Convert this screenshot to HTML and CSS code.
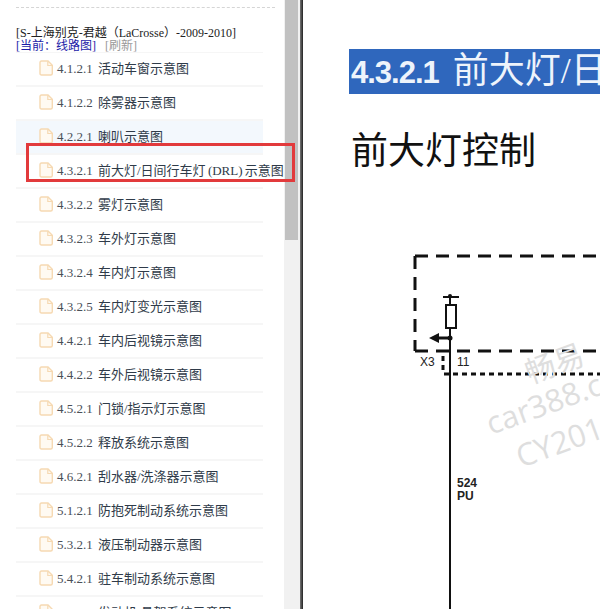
FILE: index.html
```html
<!DOCTYPE html>
<html lang="zh-CN">
<head>
    <meta charset="UTF-8">
    <title>前大灯/日间行车灯示意图</title>
    <link rel="stylesheet" href="styles.css">
</head>
<body>

<svg class="icon-defs" width="0" height="0">
    <symbol id="page" viewBox="0 0 15 16">
        <path d="M1 2.5 Q1 1 2.5 1 H9 L13.3 5.3 V13.5 Q13.3 15 11.8 15 H2.5 Q1 15 1 13.5 Z" fill="#fffaf2" stroke="#f6d9b2" stroke-width="1.4"/>
        <path d="M8.8 1.2 V5.5 H13.1" fill="none" stroke="#f6d9b2" stroke-width="1.2"/>
    </symbol>
</svg>

<div class="sidebar">
    <div class="dash-line"></div>
    <div class="car-title">[S-上海别克-君越（LaCrosse）-2009-2010]</div>
    <div class="current">
        <a class="current-link">[当前：线路图]</a>
        <a class="refresh-link">[刷新]</a>
    </div>
    <ul class="doc-list">
        <li><svg class="doc-icon"><use href="#page"/></svg><span><span class="num">4.1.2.1</span> 活动车窗示意图</span></li>
        <li><svg class="doc-icon"><use href="#page"/></svg><span><span class="num">4.1.2.2</span> 除雾器示意图</span></li>
        <li class="hover"><svg class="doc-icon"><use href="#page"/></svg><span><span class="num">4.2.2.1</span> 喇叭示意图</span></li>
        <li><svg class="doc-icon"><use href="#page"/></svg><span><span class="num">4.3.2.1</span> 前大灯/日间行车灯 <span class="drl">(DRL)</span> 示意图</span></li>
        <li><svg class="doc-icon"><use href="#page"/></svg><span><span class="num">4.3.2.2</span> 雾灯示意图</span></li>
        <li><svg class="doc-icon"><use href="#page"/></svg><span><span class="num">4.3.2.3</span> 车外灯示意图</span></li>
        <li><svg class="doc-icon"><use href="#page"/></svg><span><span class="num">4.3.2.4</span> 车内灯示意图</span></li>
        <li><svg class="doc-icon"><use href="#page"/></svg><span><span class="num">4.3.2.5</span> 车内灯变光示意图</span></li>
        <li><svg class="doc-icon"><use href="#page"/></svg><span><span class="num">4.4.2.1</span> 车内后视镜示意图</span></li>
        <li><svg class="doc-icon"><use href="#page"/></svg><span><span class="num">4.4.2.2</span> 车外后视镜示意图</span></li>
        <li><svg class="doc-icon"><use href="#page"/></svg><span><span class="num">4.5.2.1</span> 门锁/指示灯示意图</span></li>
        <li><svg class="doc-icon"><use href="#page"/></svg><span><span class="num">4.5.2.2</span> 释放系统示意图</span></li>
        <li><svg class="doc-icon"><use href="#page"/></svg><span><span class="num">4.6.2.1</span> 刮水器/洗涤器示意图</span></li>
        <li><svg class="doc-icon"><use href="#page"/></svg><span><span class="num">5.1.2.1</span> 防抱死制动系统示意图</span></li>
        <li><svg class="doc-icon"><use href="#page"/></svg><span><span class="num">5.3.2.1</span> 液压制动器示意图</span></li>
        <li><svg class="doc-icon"><use href="#page"/></svg><span><span class="num">5.4.2.1</span> 驻车制动系统示意图</span></li>
        <li><svg class="doc-icon"><use href="#page"/></svg><span><span class="num">5.5.2.1</span> 发动机/悬架系统示意图</span></li>
    </ul>
</div>

<div class="scrollbar">
    <div class="scroll-thumb"></div>
</div>

<div class="divider"></div>

<div class="viewer">
    <div class="doc-heading"><span class="doc-num">4.3.2.1</span> 前大灯/日</div>
    <div class="doc-title">前大灯控制</div>
    <svg class="schematic" width="297" height="409" viewBox="303 200 297 409">
        <!-- module outline -->
        <path class="dash-thick" d="M415 256 H600 M415 256 V351 M415 351 H600"/>
        <path class="dash-thin" d="M443 356 V374 M444 374 H600"/>
        <!-- wire and fuse -->
        <path class="wire" d="M450 296 V305 M450 328 V609"/>
        <path class="wire" d="M443 297 H459"/>
        <rect class="fuse" x="446" y="305" width="10" height="23"/>
        <path class="wire-arrow" d="M436 338 H450"/>
        <path d="M429 338 L439 333 V343 Z" fill="#111"/>
        <circle cx="450" cy="338" r="2.5" fill="#111"/>
        <circle cx="450" cy="296" r="2" fill="#111"/>
        <text class="pin-label" x="420" y="366">X3</text>
        <text class="pin-label" x="457" y="366">11</text>
        <text class="wire-label" x="457" y="487">524</text>
        <text class="wire-label" x="457" y="500">PU</text>
        <!-- watermark -->
        <g class="watermark">
            <text class="mark-cn" x="530" y="384" transform="rotate(-20 530 384)">畅易</text>
            <text x="491" y="435" transform="rotate(-20 491 435)">car388.c</text>
            <text x="521" y="468" transform="rotate(-20 521 468)">CY201</text>
        </g>
    </svg>
</div>

<div class="red-box"></div>

</body>
</html>
```

FILE: styles.css
```css
body {
    margin: 0;
    height: 609px;
    display: flex;
    overflow: hidden;
    background-color: #fff;
    font-family: "Liberation Serif", "Noto Sans CJK SC", serif;
}

.icon-defs {
    position: absolute;
}

.sidebar {
    width: 268px;
    flex-shrink: 0;
    padding-left: 16px;
    padding-top: 7px;
}

.dash-line {
    width: 259px;
    border-top: 1px dashed #d5d5d5;
}

.car-title {
    margin-top: 19px;
    font-size: 12px;
    line-height: 13px;
    color: #222;
    white-space: nowrap;
}

.current {
    display: flex;
    gap: 9px;
    font-size: 12px;
    line-height: 13px;
}

.current-link {
    color: #1c1ca8;
}

.refresh-link {
    color: #999;
}

.doc-list {
    width: 247px;
    margin: -1px 0 0;
    padding: 0;
    list-style: none;
    border-top: 1px solid #f6f6f6;
}

.doc-list li {
    display: flex;
    align-items: center;
    gap: 3px;
    box-sizing: border-box;
    height: 34px;
    padding-left: 23px;
    padding-bottom: 3px;
    border-bottom: 2px solid #f6f6f6;
    font-size: 13px;
    color: #2f3b49;
    white-space: nowrap;
}

.doc-list li.hover {
    background-color: #f3f8fd;
}

.doc-list .num {
    margin-right: 2px;
    color: #4a4f57;
}

.doc-list .drl {
    margin: 0 -1px;
}

.doc-icon {
    width: 15px;
    height: 16px;
    flex-shrink: 0;
}

.scrollbar {
    width: 16px;
    flex-shrink: 0;
    background-color: #f1f1f1;
}

.scroll-thumb {
    width: 13px;
    height: 240px;
    margin-left: 1px;
    background-color: #c1c1c1;
}

.divider {
    width: 3px;
    flex-shrink: 0;
    background: linear-gradient(to right, #777, #222);
}

.viewer {
    flex: 1;
    min-width: 0;
    padding-top: 49px;
    overflow: hidden;
}

.doc-heading {
    margin-left: 46px;
    padding-left: 2px;
    height: 45px;
    line-height: 45px;
    background-color: #2f67bd;
    color: #eef4fb;
    font-size: 36px;
    white-space: nowrap;
    overflow: hidden;
}

.doc-num {
    font-family: "Liberation Sans", sans-serif;
    font-size: 31px;
    font-weight: bold;
    letter-spacing: -1px;
    margin-right: 5px;
}

.doc-title {
    margin-top: 40px;
    margin-left: 48px;
    height: 36px;
    line-height: 36px;
    font-size: 37px;
    color: #111;
    white-space: nowrap;
}

.schematic {
    display: block;
    margin-top: 30px;
}

.dash-thick {
    fill: none;
    stroke: #111;
    stroke-width: 3;
    stroke-dasharray: 13 8;
}

.dash-thin {
    fill: none;
    stroke: #111;
    stroke-width: 3;
    stroke-dasharray: 5 4;
}

.wire {
    fill: none;
    stroke: #111;
    stroke-width: 2;
}

.wire-arrow {
    fill: none;
    stroke: #111;
    stroke-width: 3;
}

.fuse {
    fill: #fff;
    stroke: #111;
    stroke-width: 2;
}

.pin-label {
    font-family: "Liberation Sans", sans-serif;
    font-size: 12px;
    fill: #222;
}

.wire-label {
    font-family: "Liberation Sans", sans-serif;
    font-size: 12px;
    font-weight: bold;
    fill: #222;
}

.watermark text {
    font-family: "Open Sans", "Noto Sans CJK SC", sans-serif;
    font-size: 31px;
    fill: #dedede;
}

.watermark .mark-cn {
    font-size: 30px;
}

.red-box {
    position: absolute;
    left: 26px;
    top: 143px;
    width: 263px;
    height: 33px;
    border: 3px solid #e23a3c;
}
```
